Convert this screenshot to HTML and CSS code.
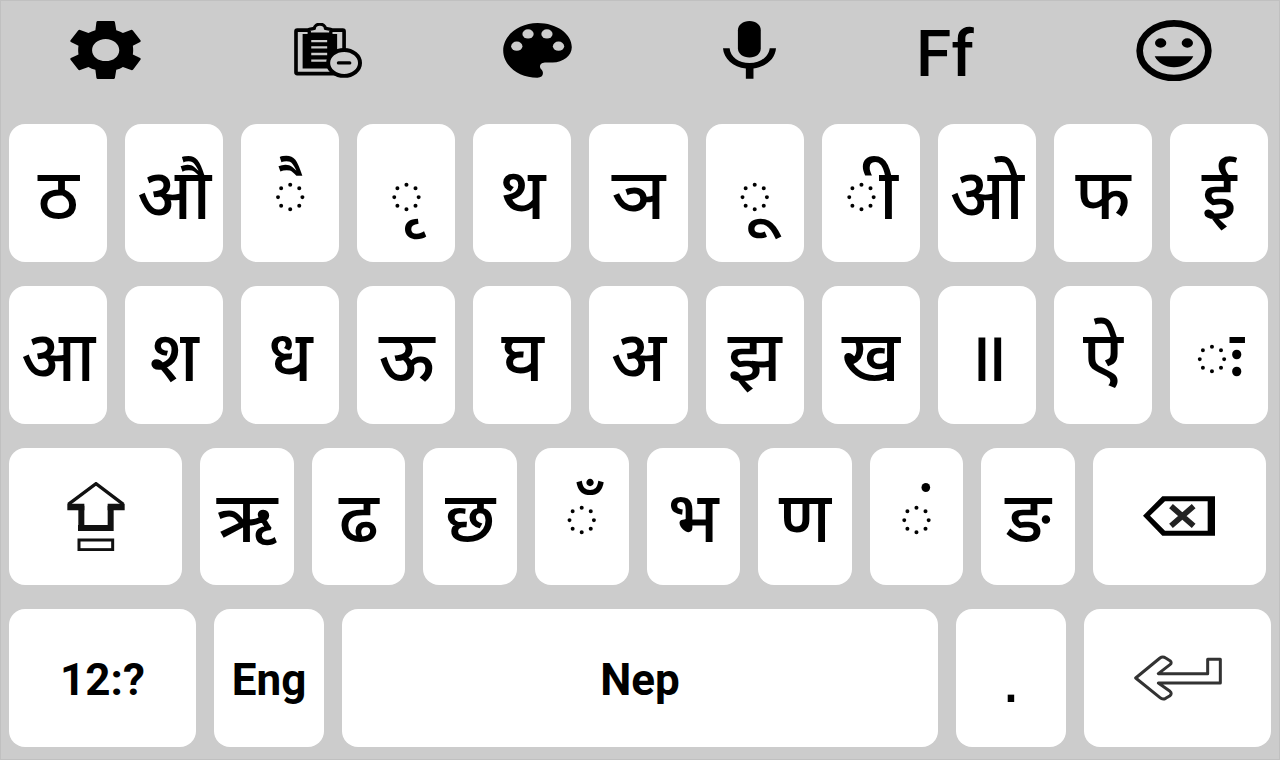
FILE: index.html
```html
<!DOCTYPE html>
<html lang="ne">

<head>
    <meta charset="UTF-8">
    <meta name="viewport" content="width=device-width, initial-scale=1.0">
    <title>Nepali Keyboard</title>
    <link rel="stylesheet" href="styles.css">
</head>

<body>
    <div class="keyboard">
        <div class="toolbar">
            <button class="tool" aria-label="Settings">
                <svg width="71" height="58" viewBox="90 63 213 175">
                    <path fill-rule="evenodd" d="M173 63H221Q224 63 225 67L229 91Q240 94 249 99L273 90Q277 89 279 92L302 121Q304 124 301 126L279 138Q281 151 279 164L301 175Q304 177 302 180L280 209Q278 212 274 211L249 202Q240 208 229 210L225 234Q224 238 221 238H173Q170 238 169 234L166 210Q155 208 145 202L120 211Q116 212 114 209L91 180Q89 177 92 175L115 164Q113 151 115 138L92 126Q89 124 91 121L114 92Q116 89 120 90L145 99Q155 94 166 91L169 67Q170 63 173 63ZM197 117C174 117 156 132 156 151C156 170 174 184 197 184C220 184 238 170 238 151C238 132 220 117 197 117Z"/>
                </svg>
            </button>
            <button class="tool" aria-label="Clipboard">
                <svg width="68" height="55" viewBox="761 71 205 165">
                    <rect x="767" y="92" width="145" height="131" rx="4" fill="none" stroke="#000" stroke-width="11"/>
                    <path d="M787 104H891V208H787Z"/>
                    <path d="M807 104V90L822 87C824 70 854 70 856 87L872 90V104Z" fill="#ccc" stroke="#000" stroke-width="10" stroke-linejoin="round"/>
                    <path d="M813 125H861M813 144H861M813 164H861M813 184H861" stroke="#ccc" stroke-width="7"/>
                    <ellipse cx="912" cy="191" rx="48" ry="39" fill="#ccc" stroke="#000" stroke-width="12"/>
                    <path d="M895 191H929" stroke="#000" stroke-width="10" stroke-linecap="round"/>
                </svg>
            </button>
            <button class="tool" aria-label="Theme">
                <svg width="69" height="55" viewBox="129 68 207 166">
                    <path d="M233 68C176 68 129 105 129 151C129 197 176 233 232 233C243 233 249 228 249 219C249 208 240 208 240 199C240 190 249 187 258 187H278C310 187 336 166 336 141C336 101 290 68 233 68Z"/>
                    <g fill="#ccc">
                        <ellipse cx="170" cy="138" rx="17" ry="14"/>
                        <ellipse cx="204" cy="101" rx="17" ry="14"/>
                        <ellipse cx="261" cy="101" rx="17" ry="14"/>
                        <ellipse cx="296" cy="138" rx="17" ry="14"/>
                    </g>
                </svg>
            </button>
            <button class="tool" aria-label="Voice input">
                <svg width="53" height="58" viewBox="789 68 160 175">
                    <path d="M834 96C834 80 849 68 869 68C889 68 903 80 903 96V150C903 166 889 178 869 178C849 178 834 166 834 150Z"/>
                    <path d="M789 150H809C811 176 837 195 869 195C901 195 927 176 930 150H949C947 181 919 207 881 211V242H858V211C819 207 791 181 789 150Z"/>
                </svg>
            </button>
            <button class="tool tool-font" aria-label="Fonts">Ff</button>
            <button class="tool" aria-label="Emoji">
                <svg width="76" height="61" viewBox="768 59 228 183">
                    <ellipse cx="882" cy="151" rx="103" ry="82" fill="none" stroke="#000" stroke-width="20"/>
                    <ellipse cx="842" cy="128" rx="17" ry="14"/>
                    <ellipse cx="922" cy="128" rx="17" ry="14"/>
                    <path d="M824 168H940C930 188 908 201 882 201C856 201 834 188 824 168Z"/>
                </svg>
            </button>
        </div>

        <div class="row row-letters">
            <button class="key key-letter">ठ</button>
            <button class="key key-letter">औ</button>
            <button class="key key-letter">◌ै</button>
            <button class="key key-letter">◌ृ</button>
            <button class="key key-letter">थ</button>
            <button class="key key-letter">ञ</button>
            <button class="key key-letter">◌ू</button>
            <button class="key key-letter">◌ी</button>
            <button class="key key-letter">ओ</button>
            <button class="key key-letter">फ</button>
            <button class="key key-letter">ई</button>
        </div>

        <div class="row row-letters">
            <button class="key key-letter">आ</button>
            <button class="key key-letter">श</button>
            <button class="key key-letter">ध</button>
            <button class="key key-letter">ऊ</button>
            <button class="key key-letter">घ</button>
            <button class="key key-letter">अ</button>
            <button class="key key-letter" lang="hi">झ</button>
            <button class="key key-letter">ख</button>
            <button class="key key-letter">॥</button>
            <button class="key key-letter">ऐ</button>
            <button class="key key-letter key-visarga">◌ः</button>
        </div>

        <div class="row row-shift">
            <button class="key" aria-label="Shift">
                <svg width="58" height="69" viewBox="202 147 174 207" fill="none" stroke="#111">
                    <path d="M206 214L289 152L371 214" stroke-width="10"/>
                    <path d="M245 218V290M333 218V290M235 285H342" stroke-width="18"/>
                    <path d="M203 222H254M324 222H375" stroke-width="20"/>
                    <rect x="238" y="321" width="101" height="29" stroke-width="9"/>
                </svg>
            </button>
            <button class="key key-letter">ऋ</button>
            <button class="key key-letter">ढ</button>
            <button class="key key-letter">छ</button>
            <button class="key key-letter">◌ँ</button>
            <button class="key key-letter">भ</button>
            <button class="key key-letter">ण</button>
            <button class="key key-letter">◌ं</button>
            <button class="key key-letter">ङ</button>
            <button class="key" aria-label="Backspace">
                <svg width="72" height="40" viewBox="630 208 216 119">
                    <path fill-rule="evenodd" d="M630 267L688 208H846V327H688ZM651 267L696 312H824V223H696Z"/>
                    <path d="M714 238L782 297M782 238L714 297" stroke="#222" stroke-width="17"/>
                </svg>
            </button>
        </div>

        <div class="row row-space">
            <button class="key key-text">12:?</button>
            <button class="key key-text">Eng</button>
            <button class="key key-text">Nep</button>
            <button class="key key-dot">.</button>
            <button class="key" aria-label="Enter">
                <svg width="88" height="46" viewBox="610 675 264 138" fill="none" stroke="#333" stroke-width="9" stroke-linejoin="round">
                    <path d="M615 744L688 684Q696 678 705 684L718 692Q725 698 718 704L683 731H831V688H869V759H683L718 784Q725 790 718 797L705 805Q696 810 688 803Z"/>
                </svg>
            </button>
        </div>
    </div>
</body>

</html>
```

FILE: styles.css
```css
* {
    box-sizing: border-box;
}

body {
    margin: 0;
    background: #ccc;
    font-family: "Noto Sans Devanagari", "Noto Sans", Roboto, sans-serif;
}

.keyboard {
    min-height: 100vh;
    display: grid;
    grid-template-rows: 100px repeat(4, 1fr);
    gap: 24px;
    padding-bottom: 13px;
    box-shadow: inset 0 0 0 1px #c0c0c0;
}

button {
    border: 0;
    padding: 0;
    color: #000;
    font-family: inherit;
    cursor: pointer;
}

svg {
    display: block;
}

.toolbar {
    display: grid;
    grid-template-columns: 224fr 209fr 220fr 193fr 220fr 76fr;
    justify-items: start;
    align-items: center;
    padding: 0 68px 0 70px;
}

.tool {
    background: none;
}

.tool-font {
    padding-top: 10px;
    font-family: Roboto, sans-serif;
    font-size: 64px;
    font-weight: 500;
    line-height: 90px;
}

.row {
    display: grid;
    gap: 18px;
}

.row-letters {
    grid-template-columns: repeat(11, minmax(0, 1fr));
    padding: 0 12px 0 9px;
}

.row-shift {
    grid-template-columns: 174fr repeat(8, 94fr) 174fr;
    padding: 0 14px 0 9px;
}

.row-space {
    grid-template-columns: 187fr 110fr 596fr 110fr 187fr;
    padding: 0 9px;
}

.key {
    display: flex;
    align-items: center;
    justify-content: center;
    min-width: 0;
    background: #fff;
    border-radius: 16px;
}

.key-letter {
    padding-top: 18px;
    font-size: 70px;
    font-weight: 500;
    line-height: 80px;
}

/* plain two dots, without the joining headline */
.key-visarga {
    font-feature-settings: "psts" 0, "abvs" 0, "blws" 0, "pres" 0, "calt" 0, "ccmp" 0, "locl" 0;
}

.key-text {
    padding-top: 4px;
    font-family: Roboto, sans-serif;
    font-size: 44px;
    font-weight: 700;
}

.key-dot {
    font-family: "Liberation Sans", sans-serif;
    font-size: 68px;
}
```
